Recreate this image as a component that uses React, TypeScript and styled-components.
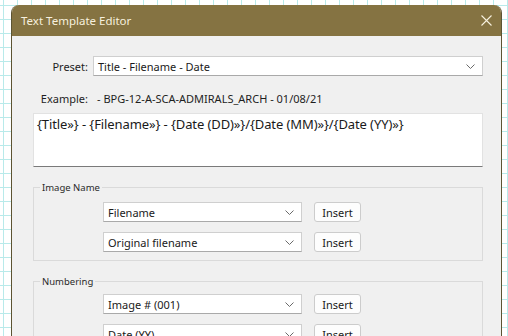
import { Fragment } from "react"
import styled, { createGlobalStyle } from "styled-components"

const Global = createGlobalStyle`
    html, body {
        margin: 0;
        padding: 0;
        height: 100%;
        overflow: hidden;
    }
    body {
        font-family: "Noto Sans", "Open Sans", sans-serif;
        font-size: 11px;
        color: #1a1a1a;
        background-color: #ffffff;
        background-image:
            linear-gradient(to right, #b8eaea 1px, transparent 1px),
            linear-gradient(to bottom, #b8eaea 1px, transparent 1px);
        background-size: 14px 14px;
        background-position: 3px 5px;
    }
`

const Window = styled.div`
    margin: 5px 0 0 11px;
    width: 491px;
    height: 360px;
    box-sizing: border-box;
    display: flex;
    flex-direction: column;
    background: #f0f0f0;
    border-left: 1px solid #5c5332;
    border-right: 1px solid #5c5332;
    border-radius: 8px 8px 0 0;
    overflow: hidden;
`

const TitleBar = styled.div`
    height: 31px;
    flex: none;
    display: flex;
    align-items: center;
    justify-content: space-between;
    padding: 0 9px 0 9px;
    background: #857342;
    color: #f6f0de;
    font-size: 11.5px;
`

const Close = styled.svg`
    width: 11px;
    height: 11px;
`

const Body = styled.div`
    display: flex;
    flex-direction: column;
    padding: 20px 18px 0 21px;
`

const Row = styled.div<{ $top?: number }>`
    display: flex;
    align-items: center;
    gap: 5px;
    margin-top: ${p => p.$top || 0}px;
`

const Label = styled.div`
    width: 55px;
    flex: none;
    text-align: right;
    color: #1e1e1e;
`

const ExampleValue = styled.div`
    margin-left: 4px;
    color: #1e1e1e;
`

const Combo = styled.div<{ $w?: number }>`
    height: 20px;
    box-sizing: border-box;
    display: flex;
    align-items: center;
    justify-content: space-between;
    padding: 0 7px 0 4px;
    background: #ffffff;
    border: 1px solid #cfcfcf;
    border-bottom-color: #a9a9a9;
    color: #1a1a1a;
    ${p => p.$w ? `width: ${p.$w}px; flex: none;` : "flex: 1;"}
`

const Chevron = () => (
    <svg width="9" height="5" viewBox="0 0 9 5">
        <path d="M0.5 0.5 L4.5 4.5 L8.5 0.5" fill="none" stroke="#6a6a6a" strokeWidth="1" />
    </svg>
)

const TemplateBox = styled.div`
    margin-top: 7px;
    height: 54px;
    box-sizing: border-box;
    padding: 1px 3px;
    background: #ffffff;
    border: 1px solid #e2e2e2;
    border-bottom: 1px solid #7a7a7a;
    font-size: 13px;
    color: #1a1a1a;
    letter-spacing: -0.1px;
`

const Group = styled.fieldset<{ $top: number }>`
    margin: ${p => p.$top}px 0 0 0;
    padding: 0 0 8px 0;
    border: 1px solid #dadada;
    min-width: 0;
`

const Legend = styled.legend`
    margin-left: 6px;
    padding: 0 2px;
    font-size: 9.5px;
    color: #2a2a2a;
`

const GroupBody = styled.div<{ $pt: number }>`
    display: flex;
    flex-direction: column;
    gap: 10px;
    padding: ${p => p.$pt}px 0 0 69px;
`

const GroupRow = styled.div`
    display: flex;
    align-items: center;
    gap: 12px;
`

const Button = styled.button`
    width: 47px;
    height: 20px;
    padding: 0;
    font-family: inherit;
    font-size: 11px;
    color: #1a1a1a;
    background: #fdfdfd;
    border: 1px solid #cccccc;
    border-radius: 3px;
`

const pick = (name: string) => (
    <GroupRow key={name}>
        <Combo $w={199}>
            <span>{name}</span>
            <Chevron />
        </Combo>
        <Button>Insert</Button>
    </GroupRow>
)

export default () => {
    return (
        <Fragment>
            <Global />
            <Window>
                <TitleBar>
                    <span>Text Template Editor</span>
                    <Close viewBox="0 0 11 11">
                        <path d="M0.5 0.5 L10.5 10.5 M10.5 0.5 L0.5 10.5" stroke="#f6f0de" strokeWidth="1.1" />
                    </Close>
                </TitleBar>
                <Body>
                    <Row>
                        <Label>Preset:</Label>
                        <Combo>
                            <span>Title - Filename - Date</span>
                            <Chevron />
                        </Combo>
                    </Row>
                    <Row $top={15}>
                        <Label>Example:</Label>
                        <ExampleValue>- BPG-12-A-SCA-ADMIRALS_ARCH - 01/08/21</ExampleValue>
                    </Row>
                    <TemplateBox>
                        {"{Title»} - {Filename»} - {Date (DD)»}/{Date (MM)»}/{Date (YY)»}"}
                    </TemplateBox>
                    <Group $top={14}>
                        <Legend>Image Name</Legend>
                        <GroupBody $pt={8}>
                            {["Filename", "Original filename"].map(pick)}
                        </GroupBody>
                    </Group>
                    <Group $top={14}>
                        <Legend>Numbering</Legend>
                        <GroupBody $pt={6}>
                            {["Image # (001)", "Date (YY)"].map(pick)}
                        </GroupBody>
                    </Group>
                </Body>
            </Window>
        </Fragment>
    )
}
